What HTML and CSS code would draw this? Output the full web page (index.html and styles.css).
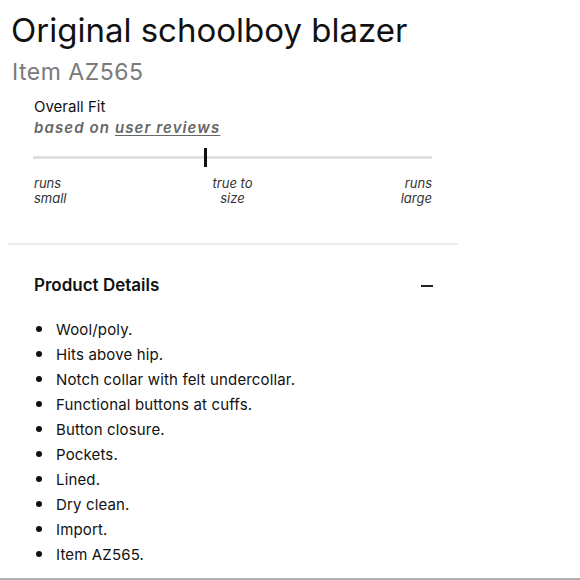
FILE: index.html
```html
<!DOCTYPE html>
<html>
<head>
<meta charset="utf-8">
<link rel="stylesheet" href="styles.css">
</head>
<body>
<div class="page">
  <h1 class="title">Original schoolboy blazer</h1>
  <div class="item">Item AZ565</div>
  <section class="fit">
    <div class="fit-title">Overall Fit</div>
    <div class="fit-sub">based on <span class="link">user reviews</span></div>
    <div class="track"><div class="marker"></div></div>
    <div class="labels">
      <span class="lab left">runs<br>small</span>
      <span class="lab mid">true to<br>size</span>
      <span class="lab right">runs<br>large</span>
    </div>
  </section>
  <hr class="divider">
  <section class="details">
    <div class="details-head">
      <span class="details-title">Product Details</span>
      <span class="minus"></span>
    </div>
    <ul class="list">
      <li>Wool/poly.</li>
      <li>Hits above hip.</li>
      <li>Notch collar with felt undercollar.</li>
      <li>Functional buttons at cuffs.</li>
      <li>Button closure.</li>
      <li>Pockets.</li>
      <li>Lined.</li>
      <li>Dry clean.</li>
      <li>Import.</li>
      <li>Item AZ565.</li>
    </ul>
  </section>
</div>
<div class="bottom-line"></div>
</body>
</html>
```
FILE: styles.css
```css
html, body { margin: 0; padding: 0; background: #fff; }
body { font-family: Inter, "Liberation Sans", sans-serif; color: #111; width: 580px; height: 580px; overflow: hidden; position: relative; }
.title { margin: 0; padding: 10px 0 0 11px; font-size: 33px; font-weight: 400; line-height: 40px; color: #111; }
.item { padding-left: 12px; margin-top: 7px; font-size: 23px; line-height: 30px; color: #7a7a7a; letter-spacing: 0.5px; }
.fit { padding: 10px 0 0 33px; width: 399px; }
.fit-title { font-size: 15px; line-height: 20px; color: #111; padding-left: 1px; }
.fit-sub { font-size: 15px; line-height: 22px; font-style: italic; font-weight: 600; color: #666; letter-spacing: 1.1px; padding-left: 1px; }
.fit-sub .link { text-decoration: underline; text-underline-offset: 2px; text-decoration-thickness: 1px; }
.track { position: relative; height: 3px; background: #e0e0e0; margin-top: 17px; }
.marker { position: absolute; left: 171px; top: -8px; width: 3px; height: 19px; background: #111; }
.labels { display: grid; grid-template-columns: 1fr auto 1fr; margin-top: 17px; font-size: 13px; line-height: 15px; font-style: italic; color: #333; }
.lab.left { justify-self: start; padding-left: 1px; }
.lab.mid { text-align: center; }
.lab.right { justify-self: end; text-align: right; }
.divider { margin: 37px 0 0 8px; width: 450px; border: 0; height: 2px; background: #ececec; }
.details { padding: 30px 0 0 34px; width: 399px; }
.details-head { display: flex; justify-content: space-between; align-items: center; height: 20px; }
.details-title { font-size: 17px; font-weight: 600; color: #111; }
.minus { width: 12px; height: 2px; background: #222; margin-bottom: -1px; }
.list { margin: 22px 0 0 0; padding: 0; list-style: none; }
.list li { position: relative; padding-left: 22px; font-size: 15px; line-height: 25px; color: #111; letter-spacing: 0.15px; }
.list li::before { content: ""; position: absolute; left: 2px; top: 9px; width: 6px; height: 6px; border-radius: 50%; background: #111; }
.bottom-line { position: absolute; left: 0; bottom: 0; width: 580px; height: 2px; background: #b0b0b0; }
```
